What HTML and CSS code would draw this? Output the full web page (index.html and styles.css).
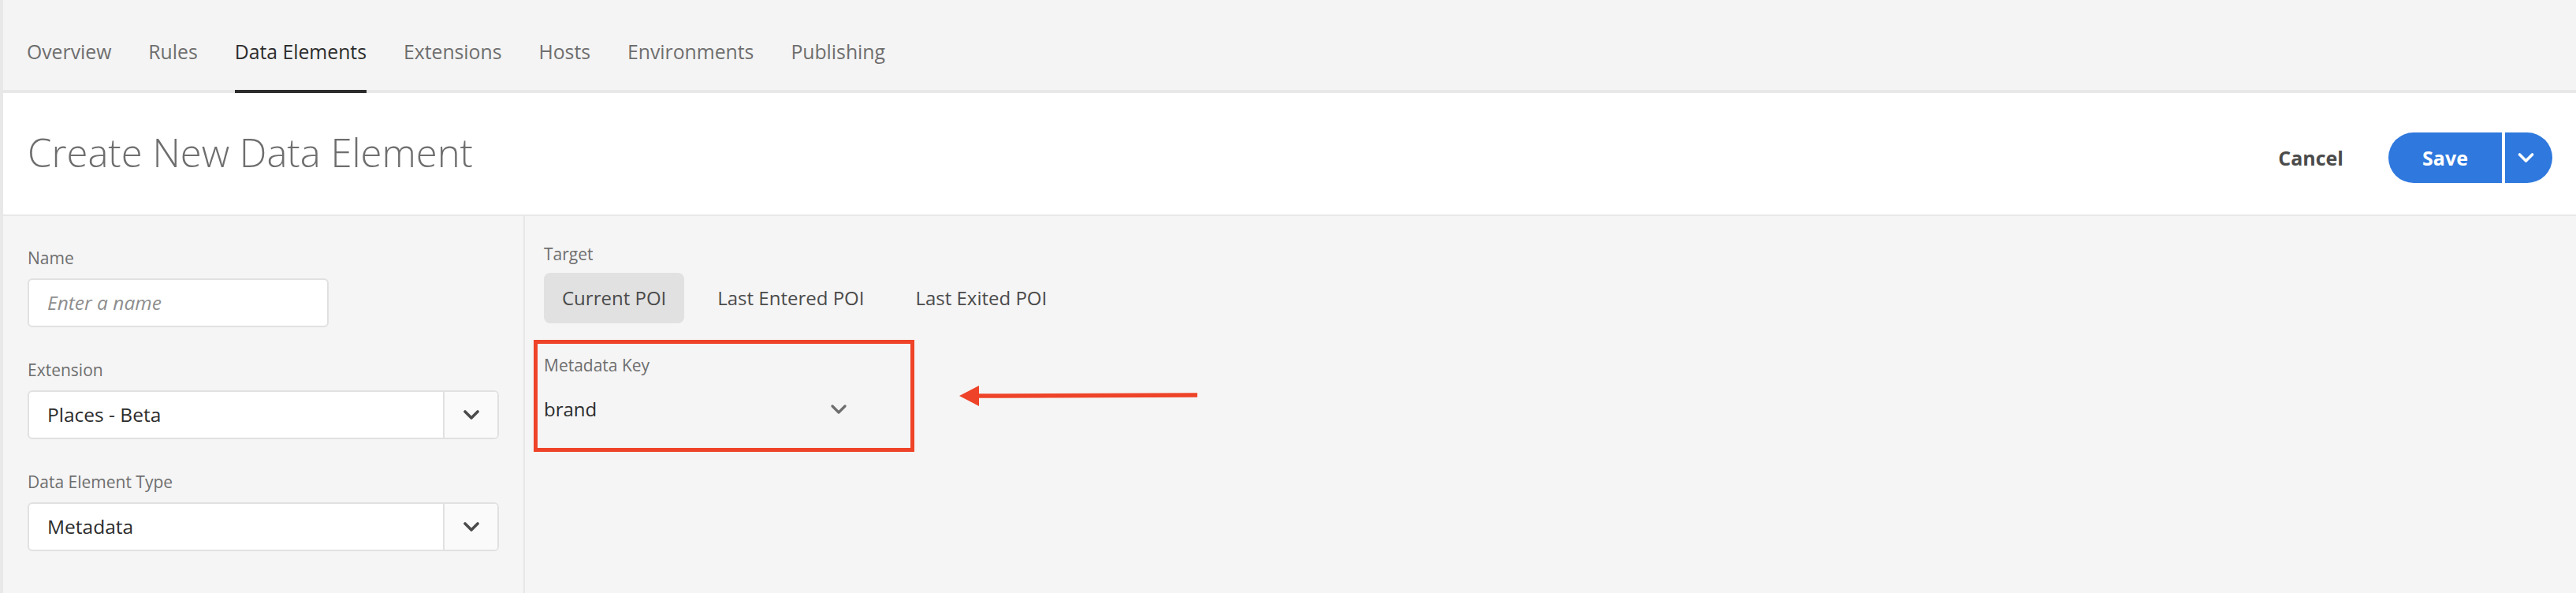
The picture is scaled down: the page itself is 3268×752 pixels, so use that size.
FILE: index.html
```html
<!DOCTYPE html>
<html lang="en">
<head>
<meta charset="utf-8">
<title>Create New Data Element</title>
<link rel="stylesheet" href="styles.css">
</head>
<body>
<div class="app">
  <nav class="tabs">
    <a class="tab">Overview</a>
    <a class="tab">Rules</a>
    <a class="tab tab-active">Data Elements</a>
    <a class="tab">Extensions</a>
    <a class="tab">Hosts</a>
    <a class="tab">Environments</a>
    <a class="tab">Publishing</a>
  </nav>

  <header class="header">
    <h1 class="title">Create New Data Element</h1>
    <div class="actions">
      <button class="btn-quiet">Cancel</button>
      <div class="split">
        <button class="split-main">Save</button>
        <button class="split-menu" aria-label="More save options">
          <svg class="chev" width="21" height="12" viewBox="0 0 21 12"><path d="M2.5 2 L10.5 10 L18.5 2" fill="none" stroke="#fff" stroke-width="3.6" stroke-linecap="round" stroke-linejoin="round"/></svg>
        </button>
      </div>
    </div>
  </header>

  <main class="content">
    <aside class="side">
      <div class="field">
        <label class="label">Name</label>
        <div class="textfield"><span class="placeholder">Enter a name</span></div>
      </div>
      <div class="field">
        <label class="label">Extension</label>
        <div class="select">
          <span class="select-value">Places - Beta</span>
          <span class="select-btn">
            <svg width="20" height="12" viewBox="0 0 20 12"><path d="M2 2 L10 10 L18 2" fill="none" stroke="#4b4b4b" stroke-width="3.6" stroke-linecap="round" stroke-linejoin="round"/></svg>
          </span>
        </div>
      </div>
      <div class="field">
        <label class="label">Data Element Type</label>
        <div class="select">
          <span class="select-value">Metadata</span>
          <span class="select-btn">
            <svg width="20" height="12" viewBox="0 0 20 12"><path d="M2 2 L10 10 L18 2" fill="none" stroke="#4b4b4b" stroke-width="3.6" stroke-linecap="round" stroke-linejoin="round"/></svg>
          </span>
        </div>
      </div>
    </aside>

    <section class="panel">
      <div class="label">Target</div>
      <div class="segmented">
        <button class="seg seg-selected">Current POI</button>
        <button class="seg">Last Entered POI</button>
        <button class="seg">Last Exited POI</button>
      </div>

      <div class="annot-row">
        <div class="annot-box">
          <div class="label">Metadata Key</div>
          <div class="picker">
            <span class="picker-value">brand</span>
            <svg class="picker-chev" width="20" height="12" viewBox="0 0 20 12"><path d="M2 2 L10 10 L18 2" fill="none" stroke="#6e6e6e" stroke-width="3.2" stroke-linecap="round" stroke-linejoin="round"/></svg>
          </div>
        </div>
        <svg class="arrow" width="302" height="30" viewBox="0 0 302 30">
          <polygon points="0,15 25,2 25,28" fill="#ee4328"/>
          <line x1="23" y1="15" x2="302" y2="14" stroke="#ee4328" stroke-width="5.5"/>
        </svg>
      </div>
    </section>
  </main>
</div>
</body>
</html>
```

FILE: styles.css
```css
* { box-sizing: border-box; }

html, body {
  margin: 0;
  padding: 0;
  background: #f5f5f5;
  font-family: "Open Sans", "Noto Sans", "DejaVu Sans", sans-serif;
  color: #4b4b4b;
}

button {
  font-family: inherit;
  border: none;
  background: none;
  padding: 0;
  margin: 0;
  cursor: pointer;
}

.app {
  display: flex;
  flex-direction: column;
  height: 100vh;
  border-left: 4px solid #e8e8e8;
  overflow: hidden;
}

/* ---------- tabs ---------- */
.tabs {
  display: flex;
  gap: 47px;
  height: 118px;
  padding-left: 30px;
  border-bottom: 4px solid #e8e8e8;
  background: #f4f4f4;
  flex: none;
}

.tab {
  display: block;
  height: 118px;
  padding-top: 49px;
  font-size: 24.75px;
  line-height: 34px;
  color: #6e6e6e;
  border-bottom: 4px solid transparent;
  white-space: nowrap;
}

.tab-active {
  color: #2c2c2c;
  border-bottom-color: #2c2c2c;
}

/* ---------- header ---------- */
.header {
  display: flex;
  align-items: flex-start;
  height: 156px;
  padding: 0 30px 0 31px;
  background: #fff;
  border-bottom: 2px solid #e8e8e8;
  flex: none;
}

.title {
  margin: 41px 0 0 0;
  font-size: 49px;
  line-height: 68px;
  font-weight: 300;
  color: #6e6e6e;
  white-space: nowrap;
}

.actions {
  margin-left: auto;
  margin-top: 50px;
  display: flex;
  align-items: center;
}

.btn-quiet {
  height: 64px;
  line-height: 64px;
  font-size: 25px;
  font-weight: 700;
  color: #4b4b4b;
  margin-right: 57px;
}

.split {
  display: flex;
  gap: 4px;
}

.split-main {
  width: 144px;
  height: 64px;
  border-radius: 32px 0 0 32px;
  background: #2e78de;
  color: #fff;
  font-size: 25px;
  font-weight: 700;
  line-height: 64px;
}

.split-menu {
  width: 60px;
  height: 64px;
  border-radius: 0 32px 32px 0;
  background: #2e78de;
  display: flex;
  align-items: center;
  justify-content: center;
  padding-right: 8px;
}

.chev { display: block; }

/* ---------- content ---------- */
.content {
  flex: 1;
  display: flex;
}

.side {
  width: 662px;
  flex: none;
  padding: 38px 0 0 31px;
  border-right: 2px solid #e8e8e8;
}

.field + .field { margin-top: 39px; }

.label {
  display: block;
  height: 30px;
  font-size: 21px;
  line-height: 30px;
  color: #6e6e6e;
  white-space: nowrap;
}

.field .label { margin-bottom: 11px; }

.textfield {
  width: 382px;
  height: 62px;
  border: 2px solid #e1e1e1;
  border-radius: 6px;
  background: #fff;
  padding-left: 23px;
  line-height: 58px;
}

.placeholder {
  font-size: 24.5px;
  font-style: italic;
  color: #8e8e8e;
}

.select {
  display: flex;
  width: 598px;
  height: 62px;
  border: 2px solid #e1e1e1;
  border-radius: 6px;
  background: #fff;
  overflow: hidden;
}

.select-value {
  flex: 1;
  padding-left: 23px;
  font-size: 24.5px;
  line-height: 58px;
  color: #2c2c2c;
}

.select-btn {
  width: 69px;
  flex: none;
  border-left: 2px solid #e1e1e1;
  background: #fafafa;
  display: flex;
  align-items: center;
  justify-content: center;
}

.select-btn svg { display: block; }

/* ---------- right panel ---------- */
.panel {
  flex: 1;
  padding: 33px 24px 0 24px;
}

.segmented {
  display: flex;
  gap: 19px;
  margin-top: 9px;
}

.seg {
  height: 64px;
  padding: 0 23px;
  border-radius: 8px;
  font-size: 24px;
  line-height: 64px;
  color: #4b4b4b;
  white-space: nowrap;
}

.seg-selected { background: #e1e1e1; }

.annot-row {
  display: flex;
  align-items: center;
  margin-top: 21px;
}

.annot-box {
  width: 483px;
  margin-left: -13px;
  border: 5px solid #ee4328;
  padding: 12px 8px 18px 8px;
}

.picker {
  display: flex;
  align-items: center;
  width: 394px;
  height: 62px;
  margin-top: 10px;
}

.picker-value {
  flex: 1;
  font-size: 24px;
  line-height: 62px;
  color: #2c2c2c;
}

.picker-chev {
  display: block;
  margin-right: 10px;
}

.arrow {
  display: block;
  margin-left: 57px;
  flex: none;
}
```
